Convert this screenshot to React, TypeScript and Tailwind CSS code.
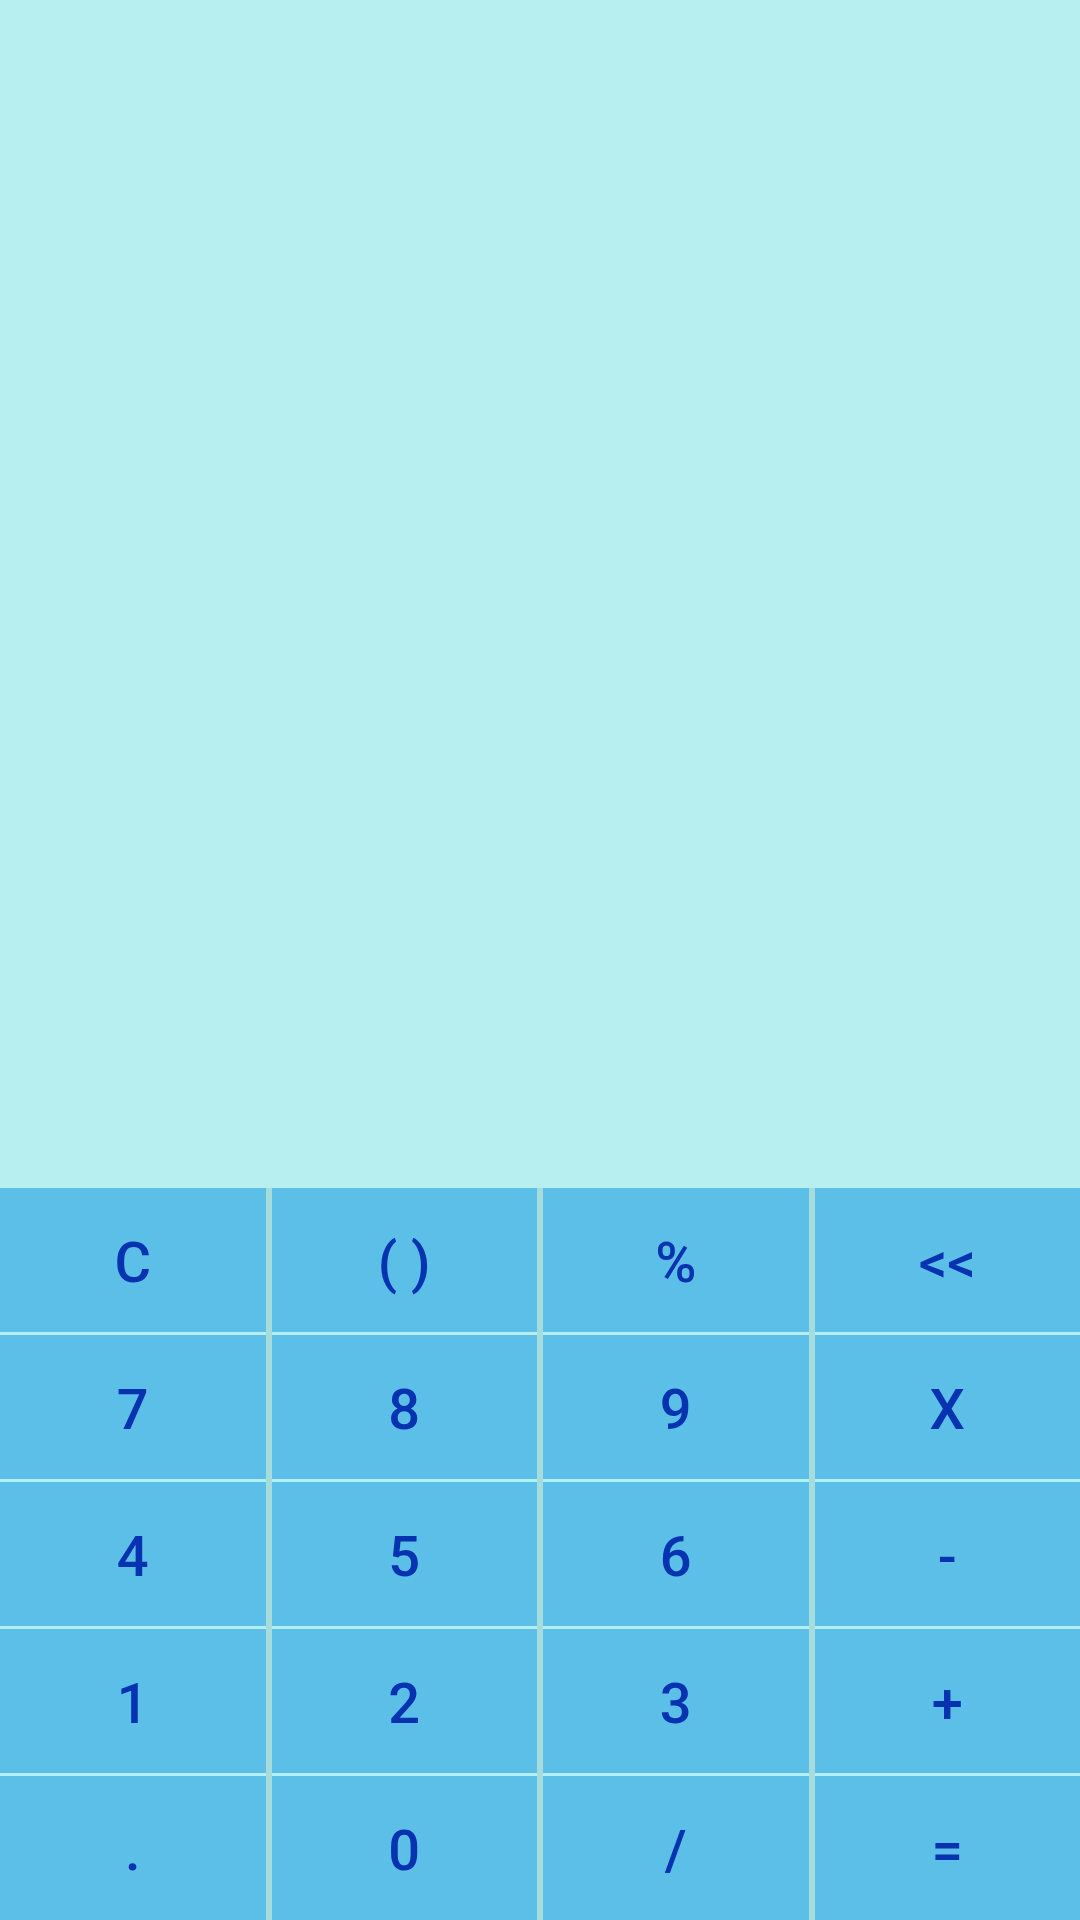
const rows = [
  ["C", "( )", "%", "<<"],
  ["7", "8", "9", "X"],
  ["4", "5", "6", "-"],
  ["1", "2", "3", "+"],
  [".", "0", "/", "="],
];

export default function App() {
  const columns = [0, 1, 2, 3].map((c) => rows.map((r) => r[c]));

  return (
    <div
      className="w-[1080px] h-[1920px] flex flex-col bg-[#b7eff0]"
      style={{ fontFamily: "Roboto, 'Noto Sans', sans-serif" }}
    >
      <div className="flex-1" />
      <div className="h-[732px] flex gap-[6px] bg-[#a7dcdc]">
        {columns.map((col, ci) => (
          <div key={ci} className="flex-1 flex flex-col gap-[3px] bg-[#b5f0f1]">
            {col.map((label) => (
              <button
                key={label}
                className="h-[144px] pt-[5px] flex items-center justify-center bg-[#5bbfe8] text-[#0733b0] text-[56px] font-medium leading-none"
              >
                {label}
              </button>
            ))}
          </div>
        ))}
      </div>
    </div>
  );
}
